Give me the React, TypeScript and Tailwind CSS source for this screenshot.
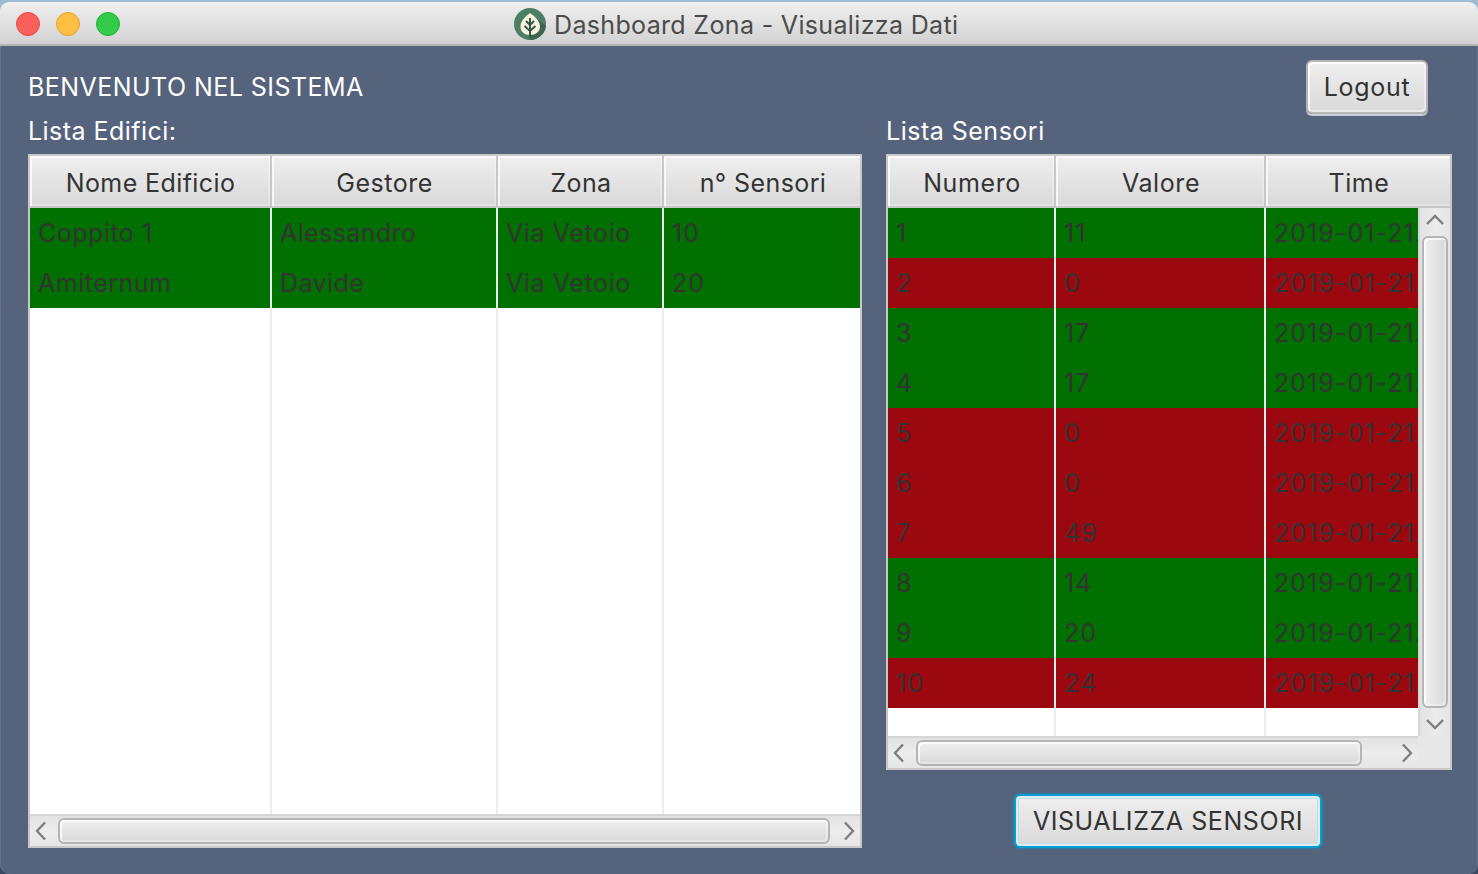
import type { ReactNode } from "react";

type Column = { title: string; width: string; spacing: string; cell: string };
type Row = { cells: string[]; ok: boolean };

const BUILDING_COLUMNS: Column[] = [
  { title: "Nome Edificio", width: "w-[242px]", spacing: "tracking-[0.4px] pl-px", cell: "tracking-[0.5px]" },
  { title: "Gestore", width: "w-[226px]", spacing: "tracking-[0.5px] pl-px", cell: "tracking-[0.4px]" },
  { title: "Zona", width: "w-[166px]", spacing: "tracking-[0.4px] pl-[2px]", cell: "tracking-[0.6px]" },
  { title: "n° Sensori", width: "w-[198px]", spacing: "tracking-[0.4px]", cell: "tracking-[1.1px]" },
];

const BUILDINGS: Row[] = [
  { cells: ["Coppito 1", "Alessandro", "Via Vetoio", "10"], ok: true },
  { cells: ["Amiternum", "Davide", "Via Vetoio", "20"], ok: true },
];

const SENSOR_COLUMNS: Column[] = [
  { title: "Numero", width: "w-[168px]", spacing: "tracking-[0.6px] pl-[2px]", cell: "tracking-[1.1px]" },
  { title: "Valore", width: "w-[210px]", spacing: "tracking-[0.6px] pl-[2px]", cell: "tracking-[1.1px]" },
  { title: "Time", width: "w-[186px]", spacing: "tracking-[0.6px]", cell: "tracking-[1.05px]" },
];

const VALUES: [string, boolean][] = [
  ["11", true],
  ["0", false],
  ["17", true],
  ["17", true],
  ["0", false],
  ["0", false],
  ["49", false],
  ["14", true],
  ["20", true],
  ["24", false],
];

const SENSORS: Row[] = VALUES.map(([value, ok], i) => ({
  cells: [String(i + 1), value, "2019-01-21..."],
  ok,
}));

function LeafLogo() {
  return (
    <svg width="32" height="32" viewBox="0 0 32 32" className="mt-[2px] shrink-0">
      <circle cx="16" cy="16" r="16" fill="#4d7f66" />
      <path d="M23 11 L32 18 A16 16 0 0 1 16 32 L16 26 Z" fill="#3d6551" />
      <path d="M16 5 C20 8 26 12.500 26 18.500 C26 24 21.500 27 16 27 C10.500 27 6.500 24 6.500 18.500 C6.500 12.500 12 8 16 5Z" fill="#fdf3dc" />
      <path d="M16 10 V30 M12 13 L16 17 L20 13 M10.500 18 L16 23 L21.500 18" fill="none" stroke="#31594a" strokeWidth="2" />
    </svg>
  );
}

function Chevron({ dir }: { dir: "left" | "right" | "up" | "down" }) {
  const path = {
    left: "M14 1.500 L6 10 L14 18.500",
    right: "M6 1.500 L14 10 L6 18.500",
    up: "M2 14 L10 6 L18 14",
    down: "M2 6 L10 14 L18 6",
  }[dir];
  return (
    <svg width="20" height="20" viewBox="0 0 20 20" className="shrink-0">
      <path d={path} fill="none" stroke="#7e7e7e" strokeWidth="2.400" />
    </svg>
  );
}

function HorizontalBar({ thumb }: { thumb: string }) {
  return (
    <div className="flex h-8 w-full items-center border-t-2 border-[#d6d6d6] bg-gradient-to-b from-[#e2e2e2] via-[#ececec] to-[#e6e6e6]">
      <div className="flex w-7 shrink-0 pl-px">
        <Chevron dir="left" />
      </div>
      <div className={`h-[26px] shrink-0 rounded-[6px] border-2 border-[#b5b5b5] bg-gradient-to-b from-[#efefef] to-[#d9d9d9] shadow-[inset_2px_2px_0_0_rgba(255,255,255,0.7),inset_-2px_-2px_0_0_rgba(255,255,255,0.35)] ${thumb}`} />
      <div className="flex flex-1 justify-end pr-px">
        <Chevron dir="right" />
      </div>
    </div>
  );
}

function VerticalBar() {
  return (
    <div className="flex h-full w-8 shrink-0 flex-col border-l-2 border-[#d6d6d6] bg-gradient-to-r from-[#e2e2e2] via-[#ececec] to-[#e6e6e6]">
      <div className="flex h-7 shrink-0 items-start pt-[2px] pl-[5px]">
        <Chevron dir="up" />
      </div>
      <div className="ml-[2px] h-[472px] w-[26px] shrink-0 rounded-[6px] border-2 border-[#b5b5b5] bg-gradient-to-r from-[#efefef] to-[#d9d9d9] shadow-[inset_2px_2px_0_0_rgba(255,255,255,0.7),inset_-2px_-2px_0_0_rgba(255,255,255,0.35)]" />
      <div className="flex pt-[6px] pl-[5px]">
        <Chevron dir="down" />
      </div>
    </div>
  );
}

function HeaderRow({ columns }: { columns: Column[] }) {
  return (
    <div className="flex h-[52px] shrink-0">
      {columns.map((c, i) => (
        <div
          key={c.title}
          className={`flex shrink-0 items-center justify-center border-b-2 border-[#c8c8c8] bg-gradient-to-b from-[#efefef] to-[#d9d9d9] pt-1 text-[#333] shadow-[inset_2px_2px_0_0_rgba(255,255,255,0.75),inset_-2px_-2px_0_0_rgba(255,255,255,0.25)] ${c.width} ${c.spacing} ${i < columns.length - 1 ? "border-r-2" : ""}`}
        >
          {c.title}
        </div>
      ))}
    </div>
  );
}

function Body({ columns, rows }: { columns: Column[]; rows: Row[] }) {
  return (
    <div className="flex min-w-0 flex-1 overflow-hidden bg-white">
      {columns.map((c, col) => (
        <div key={c.title} className={`flex shrink-0 flex-col ${c.width}`}>
          {rows.map((r, i) => (
            <div
              key={i}
              className={`flex h-[50px] shrink-0 items-center overflow-hidden pl-2 whitespace-nowrap text-[#333] ${c.cell} ${r.ok ? "bg-[#007000]" : "bg-[#9b080f]"} ${col < columns.length - 1 ? "border-r-2 border-[#ededed]" : ""}`}
            >
              {r.cells[col]}
            </div>
          ))}
          <div className={`flex-1 ${col < columns.length - 1 ? "border-r-2 border-[#ededed]" : ""}`} />
        </div>
      ))}
    </div>
  );
}

function Frame({ className, children }: { className: string; children: ReactNode }) {
  return <div className={`flex flex-col overflow-hidden border-2 border-[#c8c8c8] bg-[#e8e8e8] ${className}`}>{children}</div>;
}

export default function App() {
  return (
    <div className="flex h-[874px] w-[1478px] flex-col overflow-hidden bg-gradient-to-b from-[#9ebbd2] to-[#3c4860] font-['Inter',sans-serif] text-[25px] leading-[30px]">
      <header className="mt-[2px] flex h-11 shrink-0 items-center rounded-t-[9px] border-b-2 border-[#b5b5b5] bg-gradient-to-b from-[#f0f0f0] to-[#d2d2d2] pl-4">
        <div className="flex w-[498px] gap-4 pt-px">
          <i className="size-6 rounded-full border border-[#e2463f] bg-[#fc605b]" />
          <i className="size-6 rounded-full border border-[#e1a32f] bg-[#fdbf41]" />
          <i className="size-6 rounded-full border border-[#22ab35] bg-[#34ca4a]" />
        </div>
        <LeafLogo />
        <h1 className="pt-1 pl-2 tracking-[0.34px] whitespace-nowrap text-[#4b4b4b]">Dashboard Zona - Visualizza Dati</h1>
      </header>
      <main className="flex flex-1 gap-6 rounded-b-[10px] bg-[#56637d] pl-7 shadow-[inset_1px_0_0_0_#67738c,inset_-1px_0_0_0_#67738c]">
        <section className="flex w-[834px] shrink-0 flex-col text-white">
          <p className="mt-[26px] h-[30px]">
            <span className="tracking-[0.45px] whitespace-nowrap">BENVENUTO NEL SISTEMA</span>
          </p>
          <p className="mt-[14px] h-[30px]">
            <span className="tracking-[0.45px] whitespace-nowrap">Lista Edifici:</span>
          </p>
          <Frame className="mt-2 h-[694px]">
            <HeaderRow columns={BUILDING_COLUMNS} />
            <Body columns={BUILDING_COLUMNS} rows={BUILDINGS} />
            <HorizontalBar thumb="w-[772px]" />
          </Frame>
        </section>
        <section className="flex w-[566px] shrink-0 flex-col">
          <div className="mt-[14px] flex h-14 justify-end pr-6">
            <button className="h-[54px] w-[122px] rounded-[6px] border-2 border-[#b5b5b5] bg-gradient-to-b from-[#efefef] to-[#d9d9d9] tracking-[0.7px] text-[#333] shadow-[0_2px_0_0_#c9cdd5,inset_2px_2px_0_0_rgba(255,255,255,0.75),inset_-2px_-2px_0_0_rgba(255,255,255,0.4)]">
              Logout
            </button>
          </div>
          <p className="h-[30px] text-white">
            <span className="tracking-[0.5px] whitespace-nowrap">Lista Sensori</span>
          </p>
          <Frame className="mt-2 h-[616px] shrink-0">
            <HeaderRow columns={SENSOR_COLUMNS} />
            <div className="flex h-[528px] shrink-0">
              <Body columns={SENSOR_COLUMNS} rows={SENSORS} />
              <VerticalBar />
            </div>
            <div className="w-[530px]">
              <HorizontalBar thumb="w-[446px]" />
            </div>
          </Frame>
          <div className="flex pt-6 pl-32">
            <button className="h-[54px] w-[308px] rounded-[6px] border-2 border-[#039ed3] bg-gradient-to-b from-[#efefef] to-[#d9d9d9] tracking-[0.58px] whitespace-nowrap text-[#333] shadow-[0_0_3px_0_#039ed3,inset_0_0_0_2px_#dfedf2,inset_0_0_0_3px_#c2dfe8]">
              VISUALIZZA SENSORI
            </button>
          </div>
        </section>
      </main>
    </div>
  );
}
